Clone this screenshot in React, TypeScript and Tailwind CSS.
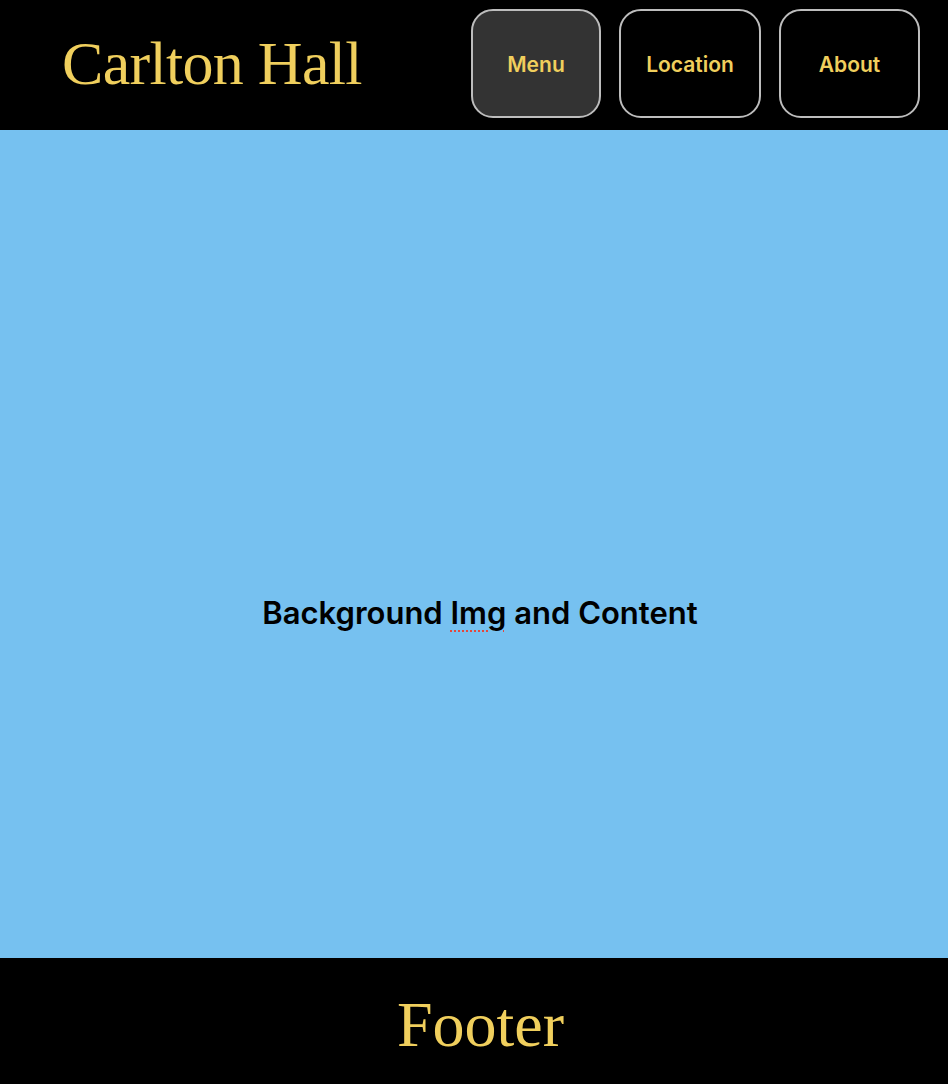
const serif = { fontFamily: '"Liberation Serif", "DejaVu Serif", serif' };

function NavButton({ label, active, width }: { label: string; active?: boolean; width: string }) {
  return (
    <button
      className={`flex h-[109px] items-center justify-center rounded-[22px] border-2 border-[#bdbdbd] pt-[2px] text-[21px] font-semibold text-[#f0cf5d] ${width} ${
        active ? "bg-[#333333]" : "bg-black"
      }`}
      style={{ fontFamily: "Inter, sans-serif" }}
    >
      {label}
    </button>
  );
}

export default function App() {
  return (
    <div className="flex min-h-[1084px] flex-col">
      <header className="flex h-[130px] items-start justify-between bg-black pl-[62px] pr-[28px] pt-[9px]">
        <h1
          className="mt-[23px] text-[62px] leading-none tracking-[-0.7px] text-[#f0cf5d]"
          style={serif}
        >
          Carlton Hall
        </h1>
        <nav className="flex items-center gap-[18px]">
          <NavButton label="Menu" active width="w-[130px]" />
          <NavButton label="Location" width="w-[142px]" />
          <NavButton label="About" width="w-[141px]" />
        </nav>
      </header>

      <main className="flex h-[828px] items-center justify-center bg-[#76c1f0] pl-[12px] pt-[139px]">
        <p
          className="text-[31px] font-semibold text-black"
          style={{ fontFamily: "Inter, sans-serif" }}
        >
          Background{" "}
          <span className="underline decoration-[#e2483d] decoration-dotted decoration-2 underline-offset-[6px]">
            Img
          </span>{" "}
          and Content
        </p>
      </main>

      <footer className="flex h-[126px] items-center justify-center bg-black pl-[13px] pt-[8px]">
        <span
          className="text-[64px] leading-none text-[#f0cf5d]"
          style={serif}
        >
          Footer
        </span>
      </footer>
    </div>
  );
}
